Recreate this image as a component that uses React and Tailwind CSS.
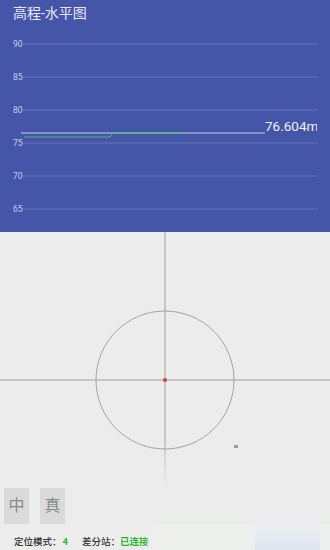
import React from "react";

const levels = [
  { v: 90, y: 44 },
  { v: 85, y: 77 },
  { v: 80, y: 110 },
  { v: 75, y: 143 },
  { v: 70, y: 176 },
  { v: 65, y: 209 },
];

function Chart() {
  return (
    <svg width="330" height="205" viewBox="0 27 330 205" className="block">
      {levels.map((l) => (
        <g key={l.v}>
          <line x1="22" x2="318" y1={l.y} y2={l.y} stroke="#6673b8" strokeWidth="1.2" />
          <text
            x="13"
            y={l.y + 3}
            fill="#c9cdea"
            fontSize="8.5"
            fontFamily="Roboto, 'Liberation Sans', sans-serif"
          >
            {l.v}
          </text>
        </g>
      ))}
      <line x1="21" x2="265" y1="133" y2="133" stroke="#c8cbe6" strokeWidth="1" />
      <path
        d="M24 137 H109 Q111 137 111.5 134.5 Q112 133 114 133 H183"
        fill="none"
        stroke="#3ec46d"
        strokeWidth="1"
      />
    </svg>
  );
}

function Canvas() {
  return (
    <svg width="330" height="256" viewBox="0 232 330 256" className="block">
      <defs>
        <linearGradient id="vfade" x1="0" y1="0" x2="0" y2="1">
          <stop offset="0" stopColor="#c6c6c6" />
          <stop offset="0.8" stopColor="#c6c6c6" />
          <stop offset="1" stopColor="#c6c6c6" stopOpacity="0" />
        </linearGradient>
      </defs>
      <rect x="164" y="232" width="2" height="256" fill="url(#vfade)" />
      <rect x="0" y="379" width="330" height="2" fill="#c6c6c6" />
      <circle cx="165" cy="380" r="69" fill="none" stroke="#9a9a9a" strokeWidth="0.9" />
      <circle cx="165" cy="380" r="2" fill="#e53935" />
      <rect x="234" y="445" width="4" height="3" fill="#9a9a9a" />
    </svg>
  );
}

export default function App() {
  return (
    <div
      className="w-[330px] h-[550px] overflow-hidden bg-[#ececec] flex flex-col"
      style={{ fontFamily: "Roboto, 'Noto Sans CJK SC', sans-serif" }}
    >
      <div className="h-[232px] bg-[#4555a8] flex flex-col relative">
        <div className="px-[13px] pt-[2px] h-[27px] text-[14px] leading-[22px] text-[#e6e8f5]">
          高程-水平图
        </div>
        <Chart />
        <div className="absolute left-[265px] top-[118px] w-[52px] overflow-hidden whitespace-nowrap text-[13.5px] leading-[16px] text-[#eef0fa]">
          76.604m
        </div>
      </div>
      <Canvas />
      <div className="flex gap-[11px] px-[4px] h-[36px]">
        <div className="w-[25px] h-[36px] bg-[#dadada] flex items-center justify-center text-[16px] text-[#8a8a8a]">
          中
        </div>
        <div className="w-[25px] h-[36px] bg-[#dadada] flex items-center justify-center text-[16px] text-[#8a8a8a]">
          真
        </div>
      </div>
      <div className="relative flex-1">
        <div className="flex items-center pl-[14px] pt-[12px] text-[9.5px] leading-[12px] font-medium text-[#333] whitespace-nowrap">
          <span>定位模式：</span>
          <span className="text-[#2fb52f] font-bold ml-[1px]">4</span>
          <span className="ml-[14px]">差分站：</span>
          <span className="text-[#2fb52f] font-bold">已连接</span>
        </div>
        <div className="absolute left-[143px] top-0 bottom-0 w-[20px] bg-gradient-to-r from-[#ececec00] to-[#eef0ee]" />
        <div className="absolute left-[163px] right-0 top-0 bottom-0 bg-[#eef0ee]" />
        <div className="absolute left-[255px] right-[10px] bottom-0 h-[30px] bg-gradient-to-b from-[#eef0ee] to-[#dde6f0]" />
      </div>
    </div>
  );
}
